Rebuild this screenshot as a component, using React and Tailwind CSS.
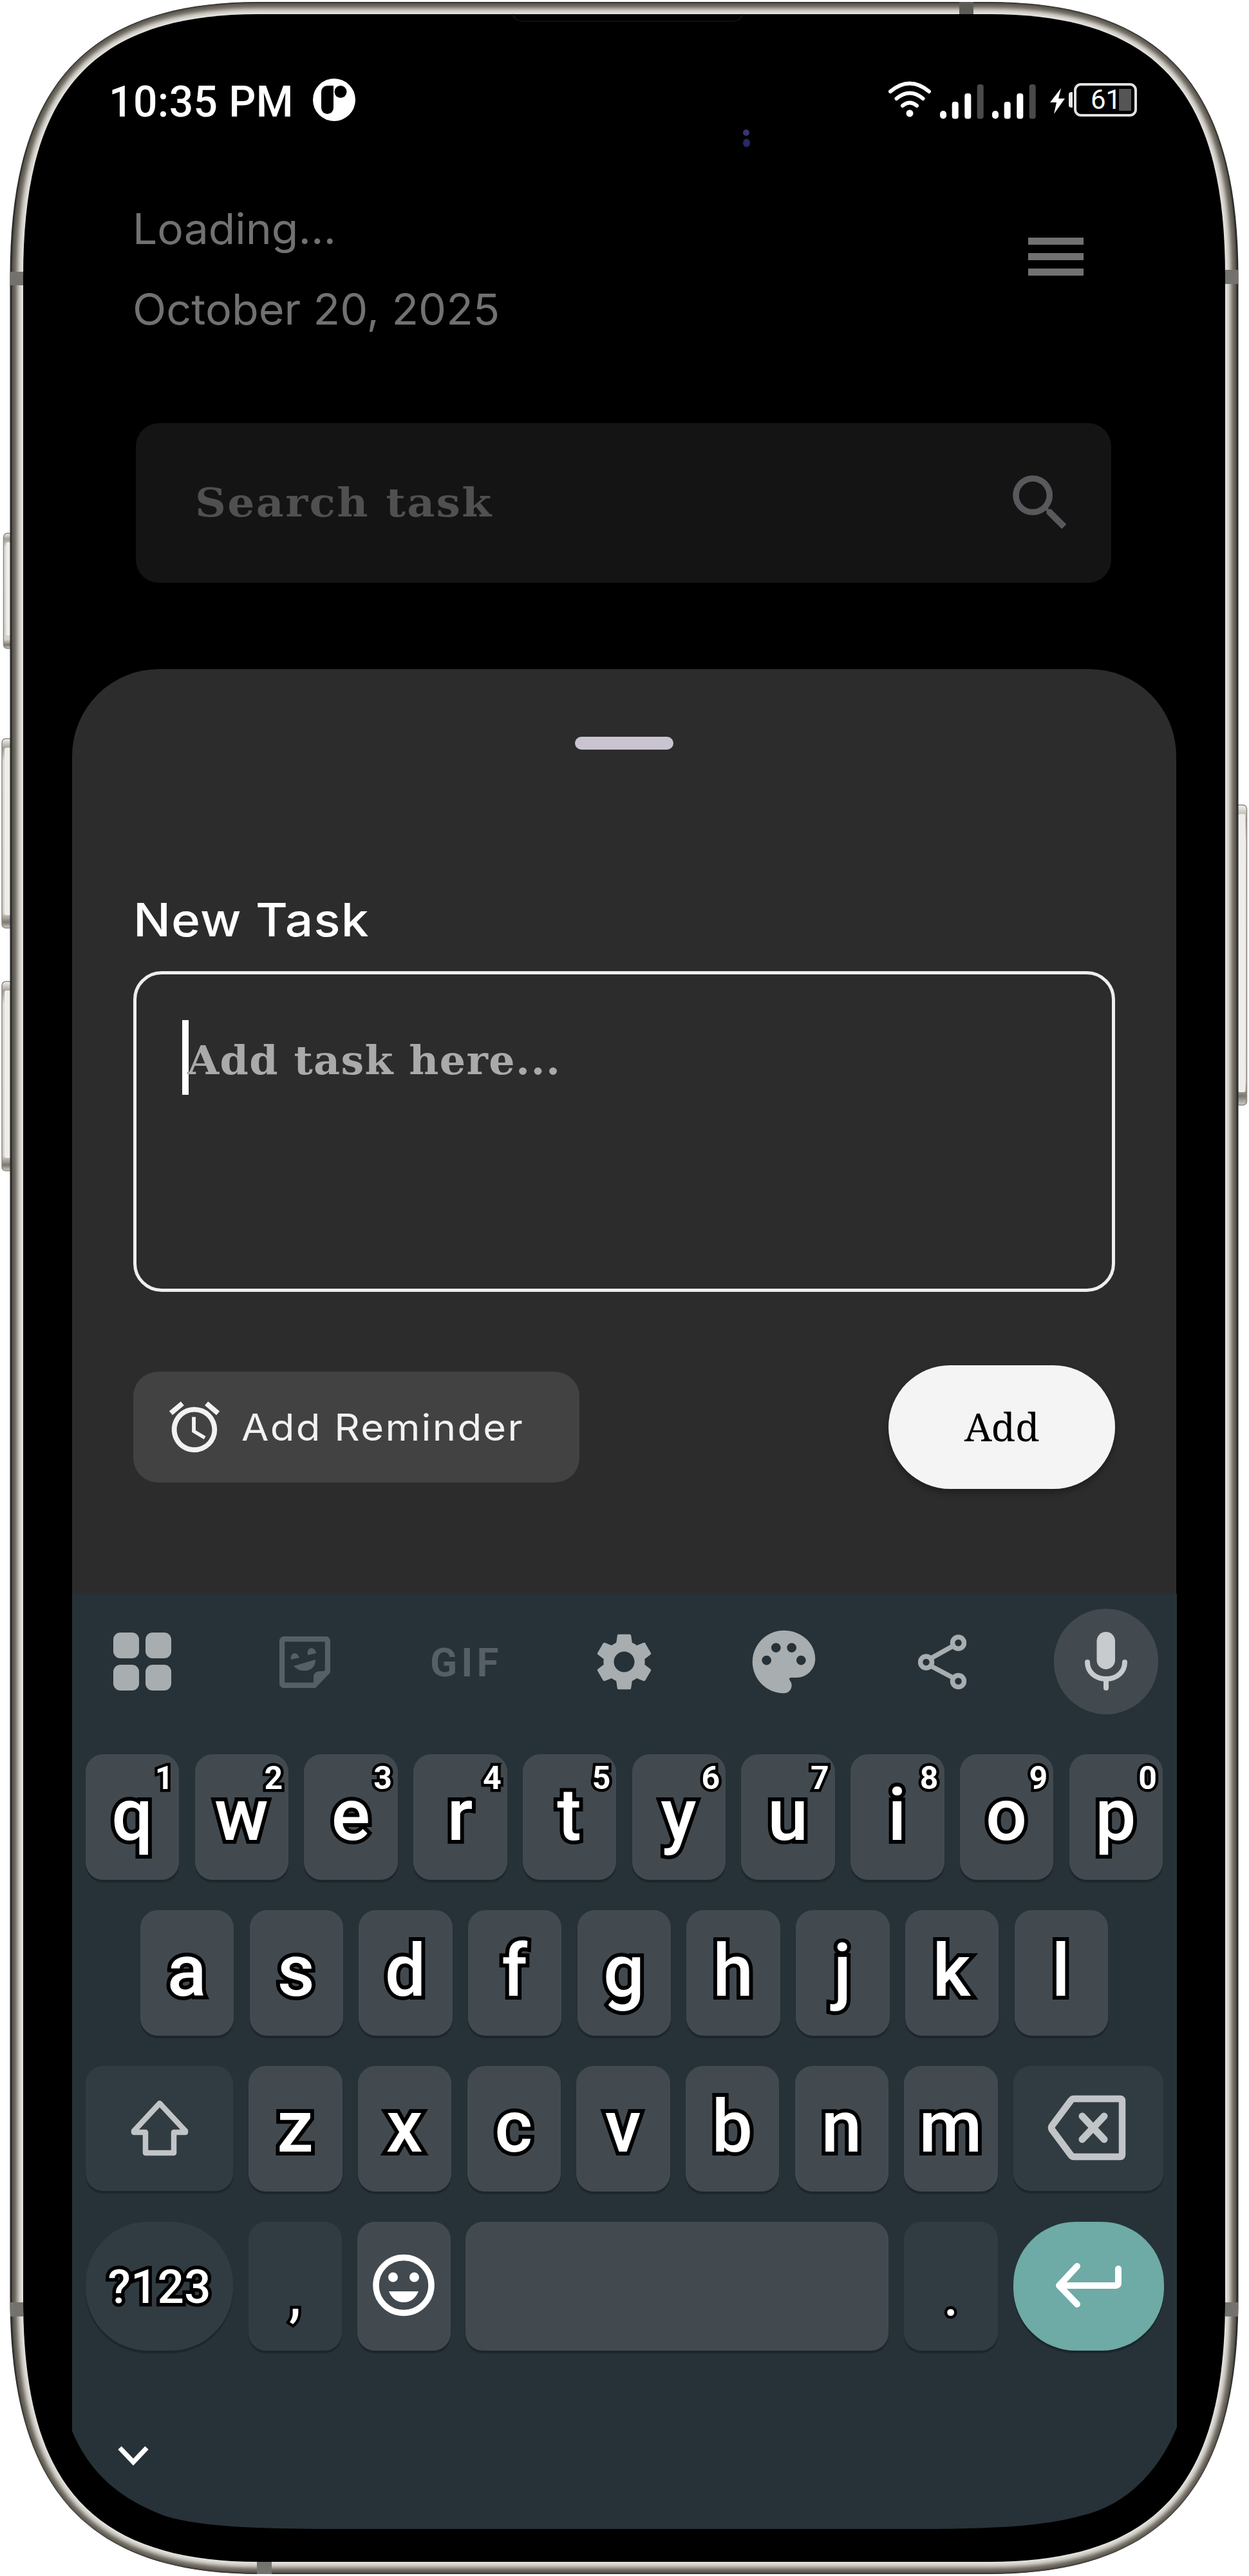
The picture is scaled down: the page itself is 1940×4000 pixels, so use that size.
import { MdAccessAlarm, MdPalette, MdSearch, MdSettings } from "react-icons/md";

const OUTER =
  "M402 3H1537C1827 3 1923.5 159 1923.5 430V3567C1923.5 3838 1827 3997 1537 3997H402C112 3997 15.5 3838 15.5 3567V430C15.5 159 112 3 402 3Z";
const INNER =
  "M402 22H1537C1817 22 1903 166 1903 430V3570C1903 3834 1817 3978 1537 3978H402C122 3978 36 3834 36 3570V430C36 166 122 22 402 22Z";

const RIM = [
  [37, "#3b3a36"],
  [34, "#5d5951"],
  [29, "#6f6a61"],
  [24, "#857f77"],
  [20, "#a09c94"],
  [16, "#bbb8b1"],
  [12, "#cfcdc7"],
  [8, "#dad8d3"],
  [4, "#e4e2dd"],
];

function SideButton({ x, y, w, h }) {
  return (
    <g>
      <rect x={x} y={y} width={w} height={h} rx="6" fill="url(#btn)" stroke="#8b877f" strokeWidth="1.5" />
      <rect x={x + 4} y={y + 14} width={w - 6} height={h - 34} rx="3" fill="#efeeea" />
    </g>
  );
}

function Frame() {
  return (
    <svg className="absolute inset-0" width="1940" height="4000" viewBox="0 0 1940 4000">
      <defs>
        <clipPath id="body">
          <path d={OUTER} />
        </clipPath>
        <linearGradient id="btn" x1="0" y1="0" x2="0" y2="1">
          <stop offset="0" stopColor="#f4f3f0" />
          <stop offset="0.05" stopColor="#a39e95" />
          <stop offset="0.12" stopColor="#dddbd6" />
          <stop offset="0.92" stopColor="#d5d2cc" />
          <stop offset="0.97" stopColor="#7d776e" />
          <stop offset="1" stopColor="#d0cdc6" />
        </linearGradient>
      </defs>
      <SideButton x={5.5} y={828} w={14} h={179} />
      <SideButton x={3} y={1147} w={17} h={294} />
      <SideButton x={3} y={1524} w={17} h={294} />
      <SideButton x={1919} y={1250} w={17.5} h={466} />
      <path d={OUTER} fill="#272a28" />
      <g clipPath="url(#body)">
        {RIM.map(([w, c]) => (
          <path key={w} d={INNER} fill="none" stroke={c} strokeWidth={w} />
        ))}
        <g fill="#74726d">
          <rect x="15" y="422" width="21" height="21" />
          <rect x="1903" y="419" width="21" height="22" />
          <rect x="15" y="3575" width="21" height="22" />
          <rect x="1903" y="3575" width="21" height="22" />
          <rect x="1490" y="3" width="22" height="20" fill="#5c5b57" />
          <rect x="399" y="3977" width="23" height="20" />
        </g>
      </g>
      <path d={INNER} fill="#000" />
      <path d="M796 22C800 30 804 33 814 33H1136C1146 33 1150 30 1154 22" fill="none" stroke="#0f0f0f" strokeWidth="2" />
      <circle cx="1159" cy="206" r="5" fill="#37356f" />
      <ellipse cx="1159.5" cy="222" rx="5.5" ry="6.5" fill="#232b62" />
    </svg>
  );
}

function Signal() {
  return (
    <svg width="68" height="54" viewBox="0 0 68 54" fill="#fff">
      <rect x="0" y="41" width="10" height="12.5" rx="5" />
      <rect x="18.7" y="27" width="10" height="26.5" rx="4" />
      <rect x="38.3" y="14" width="10" height="39.5" rx="4" />
      <rect x="57.7" y="0" width="10" height="53.5" rx="4" fill="#4a4a4a" />
    </svg>
  );
}

function StatusBar() {
  return (
    <div className="flex h-[188px] items-start pl-[57px] pr-[61px] pt-[122px]">
      <div className="mt-[4px] w-[284px] whitespace-nowrap text-[66px] font-medium leading-none tracking-[0.4px] text-white">10:35 PM</div>
      <svg className="ml-[33px]" width="66" height="66" viewBox="0 0 66 66">
        <circle cx="33" cy="33" r="33" fill="#fff" />
        <rect x="13" y="11" width="19" height="44" rx="9.5" />
        <circle cx="43" cy="20.5" r="9.5" />
        <rect x="24" y="11" width="8" height="10" />
      </svg>
      <div className="grow" />
      <svg className="mt-[3px]" width="68" height="58" viewBox="0 0 68 58" fill="none" stroke="#fff" strokeWidth="6" strokeLinecap="round">
        <path d="M4 17Q34 -8 64 17" />
        <path d="M13.5 28Q34 11 54.5 28" />
        <path d="M23 39Q34 30 45 39" />
        <circle cx="34" cy="51" r="5.5" fill="#fff" stroke="none" />
      </svg>
      <div className="ml-[13px] mt-[9px]"><Signal /></div>
      <div className="ml-[13px] mt-[9px]"><Signal /></div>
      <svg className="ml-[22px] mt-[15px]" width="23" height="40" viewBox="0 0 23 40" fill="#fff">
        <path d="M17 0L0 22H10L6 40L23 16H13Z" />
      </svg>
      <div className="ml-[6px] mt-[21px] h-[24px] w-[6px] rounded-l-[4px] bg-[#e8e8e8]" />
      <div className="ml-[2px] mt-[7px] flex h-[52px] w-[98px] items-center rounded-[11px] border-[4px] border-[#e0e0e0]">
        <span className="ml-[22px] w-[44px] text-[42px] leading-none text-white">61</span>
        <span className="h-[34px] w-[19px] bg-[#555555]" />
      </div>
    </div>
  );
}

function Header() {
  return (
    <div className="flex h-[469px] items-start justify-between pl-[94px] pr-[144px] text-[#717171]">
      <div className="flex flex-col gap-[59px] pt-[134px] font-['Inter'] text-[66px] leading-none">
        <div className="origin-left scale-x-[1.028] whitespace-nowrap">Loading...</div>
        <div className="origin-left scale-x-[1.035] whitespace-nowrap">October 20, 2025</div>
      </div>
      <div className="mt-[181px] flex w-[86px] flex-col gap-[13px]">
        <div className="h-[11px] bg-[#717171]" />
        <div className="h-[11px] bg-[#717171]" />
        <div className="h-[11px] bg-[#717171]" />
      </div>
    </div>
  );
}

function SearchBox() {
  return (
    <div className="ml-[99px] flex h-[248px] w-[1515px] items-center justify-between rounded-[36px] bg-[#141414] pl-[92px] pr-[53px]">
      <div className="origin-left scale-x-[1.07] whitespace-nowrap font-['DejaVu_Serif'] text-[62px] font-bold leading-none tracking-[2.2px] text-[#505050]">Search task</div>
      <MdSearch size={114} color="#5a585c" />
    </div>
  );
}

function Sheet() {
  return (
    <div className="mt-[134px] h-[1436px] rounded-t-[135px] bg-[#2c2c2c] px-[95px]">
      <div className="flex justify-center pt-[105px]">
        <div className="h-[20px] w-[153px] rounded-[10px] bg-[#cac4d0]" />
      </div>
      <div className="mt-[229px] origin-left scale-x-[1.08] whitespace-nowrap font-['Inter'] text-[71px] font-medium leading-none tracking-[1px] text-white">New Task</div>
      <div className="mt-[44px] flex h-[498px] w-[1525px] items-start rounded-[44px] border-[5px] border-[#eeeeee] pl-[71px] pt-[71px]">
        <div className="h-[116px] w-[10px] bg-white" />
        <div className="-ml-[2px] mt-[32px] origin-left scale-x-[1.04] whitespace-nowrap font-['DejaVu_Serif'] text-[61px] font-bold leading-none tracking-[1.3px] text-[#aaaaaa]">Add task here...</div>
      </div>
      <div className="mt-[114px] flex items-center justify-between">
        <div className="flex h-[172px] w-[693px] items-center rounded-[38px] bg-[#424242] pl-[48px]">
          <MdAccessAlarm size={94} color="#f2f2f2" />
          <span className="ml-[26px] origin-left scale-x-[1.08] whitespace-nowrap font-['Inter'] text-[57px] leading-none tracking-[2.1px] text-[#f2f2f2]">Add Reminder</span>
        </div>
        <div className="flex h-[192px] w-[352px] items-center justify-center rounded-full bg-[#f4f4f4] pb-[4px] font-['Noto_Serif','DejaVu_Serif',serif] text-[61px] leading-none text-black shadow-[0_6px_10px_rgba(0,0,0,0.3)]">
          Add
        </div>
      </div>
    </div>
  );
}

function GridIcon() {
  return (
    <div className="grid grid-cols-2 gap-[10px]">
      {[0, 1, 2, 3].map((i) => (
        <div key={i} className="h-[40px] w-[40px] rounded-[11px] bg-[#a8adb0]" />
      ))}
    </div>
  );
}

function StickerIcon() {
  return (
    <svg width="79" height="80" viewBox="0 0 79 80">
      <path d="M8 4H71Q75 4 75 8V54L54 76H8Q4 76 4 72V8Q4 4 8 4Z" fill="none" stroke="#555f65" strokeWidth="8.5" strokeLinejoin="round" />
      <path d="M53 78V64Q53 54 63 54H77V58L57 78Z" fill="#555f65" />
      <path d="M18 36Q17 26 24 26Q29 27 31 33Z" fill="#555f65" />
      <path d="M44 29Q42 19 50 18Q56 19 57 26Z" fill="#555f65" />
      <path d="M22 46L56 36Q56 50 43 53Q30 55 22 46Z" fill="#555f65" />
    </svg>
  );
}

function ShareIcon() {
  return (
    <svg width="75" height="86" viewBox="0 0 75 86" fill="none" stroke="#a8adb0" strokeWidth="7.5">
      <path d="M20 37L54 18M20 49L54 67" />
      <circle cx="12.5" cy="43" r="9" />
      <circle cx="62.5" cy="13" r="9" />
      <circle cx="62.5" cy="72.5" r="9" />
    </svg>
  );
}

function MicIcon() {
  return (
    <svg width="66" height="92" viewBox="0 0 66 92">
      <rect x="18.5" y="0" width="28.5" height="58" rx="14.2" fill="#c8cbcd" />
      <path d="M4 47C4 62 16 73 33 73S62 62 62 47M33 73V87" fill="none" stroke="#c8cbcd" strokeWidth="8" strokeLinecap="round" />
    </svg>
  );
}

function Toolbar() {
  return (
    <div className="flex h-[249px] items-start">
      <div className="ml-[64px] mt-[60px]"><GridIcon /></div>
      <div className="ml-[168px] mt-[66px]"><StickerIcon /></div>
      <div className="ml-[155px] mt-[76px] w-[107px] whitespace-nowrap font-['Roboto'] text-[62px] font-bold leading-none tracking-[6px] text-[#555f65]">GIF</div>
      <MdSettings className="ml-[141px] mt-[52px]" size={107} color="#a8adb0" />
      <MdPalette className="ml-[136px] mt-[47px]" size={117} color="#a8adb0" />
      <div className="ml-[150px] mt-[63px]"><ShareIcon /></div>
      <div className="ml-[136px] mt-[23px] flex h-[164px] w-[162px] items-center justify-center rounded-full bg-[#424a50]">
        <MicIcon />
      </div>
    </div>
  );
}

function LetterKey({ label, hint }) {
  return (
    <div className="flex h-[195px] w-[145.4px] shrink-0 flex-col items-center rounded-[27px] bg-[#424a50] text-white shadow-[0_4px_1px_#1d262b]">
      <div className="flex h-[38px] w-full shrink-0 justify-end pr-[9px] pt-[12px] text-[50px] font-bold leading-none [paint-order:stroke_fill] [-webkit-text-stroke:9px_#000]">
        {hint}
      </div>
      <div className="pr-[1px] text-[113px] font-medium leading-none [paint-order:stroke_fill] [-webkit-text-stroke:12px_#000]">{label}</div>
    </div>
  );
}

function Keyboard() {
  return (
    <div
      className="h-[1452px] w-[1716px] bg-[#263238]"
      style={{
        clipPath:
          "path('M0 0H1716V1294C1690 1358 1640 1416 1565 1432C1500 1449 1430 1451 1330 1452H380C300 1451 205 1450 145 1432C70 1404 26 1362 0 1300Z')",
      }}
    >
      <Toolbar />
      <div className="flex justify-between pl-[21px] pr-[22px]">
        {[..."qwertyuiop"].map((c, i) => (
          <LetterKey key={c} label={c} hint={"1234567890"[i]} />
        ))}
      </div>
      <div className="mt-[47px] flex justify-between pl-[106px] pr-[107px]">
        {[..."asdfghjkl"].map((c) => (
          <LetterKey key={c} label={c} />
        ))}
      </div>
      <div className="mt-[47px] flex justify-between pl-[21px] pr-[21px]">
        <div className="flex h-[194px] w-[229px] items-center justify-center rounded-[27px] bg-[#313c42] shadow-[0_4px_1px_#1d262b]">
          <svg width="92" height="90" viewBox="0 0 92 90" fill="none" stroke="#c1c5c7" strokeWidth="8.5" strokeLinejoin="round">
            <path d="M46 6L86 49V51H68V83H24V51H6V49Z" />
          </svg>
        </div>
        {[..."zxcvbnm"].map((c) => (
          <LetterKey key={c} label={c} />
        ))}
        <div className="flex h-[194px] w-[233px] items-center justify-center rounded-[27px] bg-[#313c42] pb-[2px] pr-[4px] shadow-[0_4px_1px_#1d262b]">
          <svg width="124" height="102" viewBox="0 0 124 102" fill="none" stroke="#c1c5c7" strokeWidth="10.5" strokeLinejoin="round" strokeLinecap="round">
            <path d="M42 6H114Q117 6 117 9V93Q117 96 114 96H42Q39 96 37 93L8 54Q6 51 8 48L37 9Q39 6 42 6Z" />
            <path d="M55 33L89 69M89 33L55 69" strokeWidth="11" />
          </svg>
        </div>
      </div>
      <div className="mt-[47px] flex justify-between pl-[21px] pr-[20px]">
        <div className="flex h-[200px] w-[229px] justify-center rounded-[97px] bg-[#313c42] pt-[65px] text-[73px] font-medium leading-none text-white shadow-[0_4px_1px_#1d262b] [paint-order:stroke_fill] [-webkit-text-stroke:11px_#000]">
          ?123
        </div>
        <div className="flex h-[200px] w-[145px] justify-center rounded-[27px] bg-[#313c42] pt-[64px] text-[96px] leading-none text-white shadow-[0_4px_1px_#1d262b] [paint-order:stroke_fill] [-webkit-text-stroke:9px_#000]">
          ,
        </div>
        <div className="flex h-[200px] w-[145px] items-center justify-center rounded-[27px] bg-[#424a50] pb-[3px] shadow-[0_4px_1px_#1d262b]">
          <svg width="96" height="97" viewBox="0 0 96 97" fill="#fff">
            <circle cx="48" cy="48.5" r="43" fill="none" stroke="#fff" strokeWidth="9.5" />
            <circle cx="31.5" cy="36" r="7.5" />
            <circle cx="64.5" cy="36" r="7.5" />
            <path d="M25 58H71Q64 75 48 75T25 58Z" />
          </svg>
        </div>
        <div className="h-[200px] w-[657px] rounded-[27px] bg-[#424a50] shadow-[0_4px_1px_#1d262b]" />
        <div className="flex h-[200px] w-[146px] justify-center rounded-[27px] bg-[#313c42] pt-[64px] text-[96px] leading-none text-white shadow-[0_4px_1px_#1d262b] [paint-order:stroke_fill] [-webkit-text-stroke:9px_#000]">
          .
        </div>
        <div className="flex h-[200px] w-[234px] items-center justify-center rounded-[97px] bg-[#6eaaa6] pb-[2px] shadow-[0_4px_1px_#1d262b]">
          <svg width="104" height="70" viewBox="0 0 104 70" fill="none" stroke="#fff" strokeWidth="10" strokeLinecap="round" strokeLinejoin="round">
            <path d="M34 5L6 35L34 64M6 35H94Q98 35 98 31V9" />
          </svg>
        </div>
      </div>
      <svg className="ml-[71px] mt-[146px]" width="50" height="36" viewBox="0 0 50 36" fill="none" stroke="#fff" strokeWidth="7.5">
        <path d="M3 5L24 27L45 5" />
      </svg>
    </div>
  );
}

export default function App() {
  return (
    <div className="relative h-[4000px] w-[1940px] overflow-hidden bg-white font-['Roboto',sans-serif]">
      <Frame />
      <div className="relative ml-[112px] w-[1715px]">
        <StatusBar />
        <Header />
        <SearchBox />
        <Sheet />
        <Keyboard />
      </div>
    </div>
  );
}
